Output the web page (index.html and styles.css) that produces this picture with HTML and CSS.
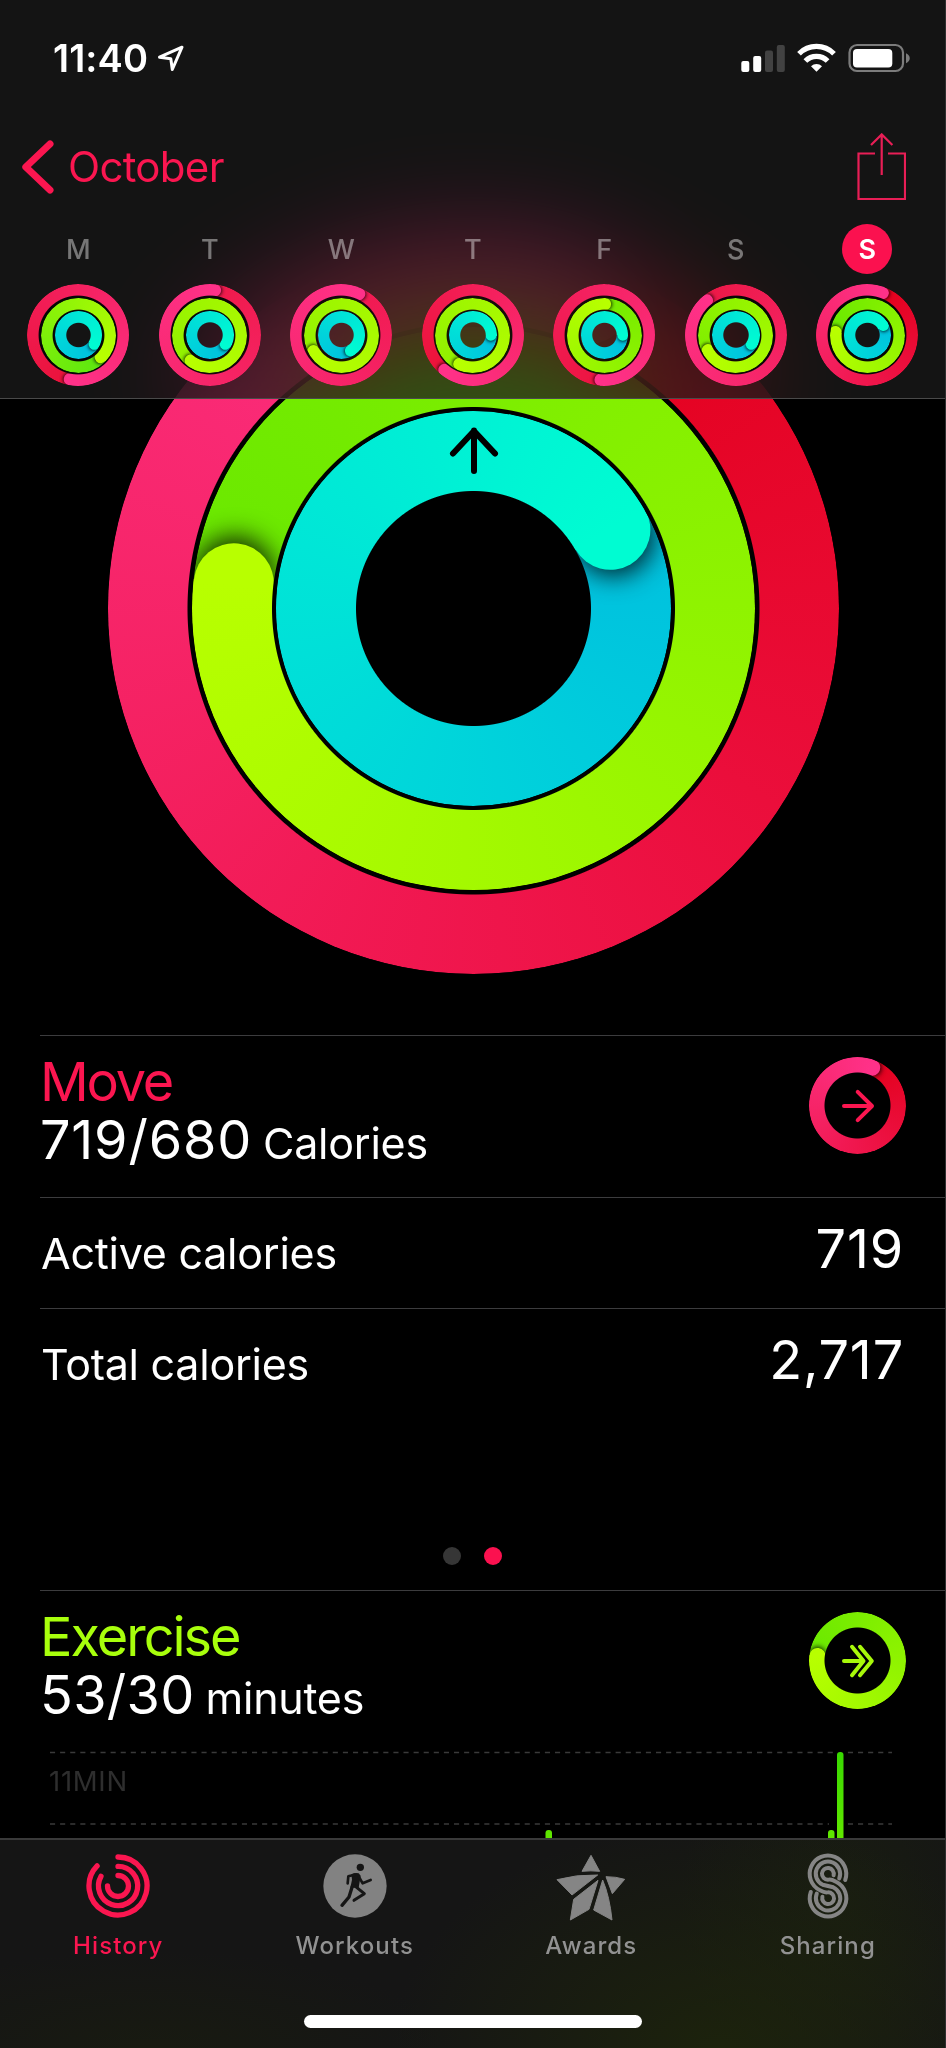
FILE: index.html
```html
<!DOCTYPE html>
<html lang="en">
<head>
<meta charset="utf-8">
<title>Activity</title>
<link rel="stylesheet" href="styles.css">
</head>
<body>
<div class="screen">
  <header class="header">
    <div class="status">
      <div class="clock"><span class="time">11:40</span>
        <svg class="location" width="28" height="28" viewBox="0 0 28 28"><path d="M2.5 13.2 25 3.2 15.3 25.5 13.8 14.7Z"/></svg>
      </div>
      <svg class="indicators" width="170" height="30" viewBox="741 43 170 30">
        <g fill="#fff"><rect x="741.3" y="61" width="8" height="11" rx="2"/><rect x="753.2" y="56" width="8" height="16" rx="2"/></g>
        <g fill="#424242"><rect x="765" y="50.5" width="8" height="21.5" rx="2"/><rect x="776.8" y="45" width="8" height="27" rx="2"/></g>
        <g fill="none" stroke="#fff" stroke-width="5.2"><path d="M799 53.8a24.5 24.5 0 0 1 35 0"/><path d="M805.4 61a15.5 15.5 0 0 1 22.2 0"/></g>
        <path fill="#fff" d="M811 66.2a8 8 0 0 1 11 0L816.5 71.8Z"/>
        <rect x="849.5" y="45" width="53.5" height="26" rx="7.5" fill="none" stroke="#7c7c7c" stroke-width="2.2"/>
        <rect x="853" y="49" width="39.3" height="18.4" rx="4" fill="#fff"/>
        <path fill="#7c7c7c" d="M906 53.2c5 2.4 5 7.6 0 10Z"/>
      </svg>
    </div>
    <nav class="nav">
      <a class="back">
        <svg width="34" height="56" viewBox="0 0 34 56"><path d="M30 5 5.800 28 30 51"/></svg>
        <span class="back-label">October</span>
      </a>
      <svg class="share" width="50" height="70" viewBox="0 0 50 70"><path d="M19 20.500H2.500V66H49V20.500H32M25.700 42V2M15 12 25.700 1.400 36.400 12"/></svg>
    </nav>
    <div class="week">
      <div class="day"><span class="letter">M</span><div class="dial small"><i class="ring move" style="--end:190deg;--dark:#ea123a"></i><i class="ring exercise" style="--end:133deg;--dark:#5be610"></i><i class="ring stand" style="--end:122deg"></i></div></div>
      <div class="day"><span class="letter">T</span><div class="dial small"><i class="ring move" style="--end:6.5deg;--dark:#ef1a4b"></i><i class="ring exercise" style="--end:217deg;--dark:#90f000"></i><i class="ring stand" style="--end:122deg"></i></div></div>
      <div class="day"><span class="letter">W</span><div class="dial small"><i class="ring move" style="--end:24deg;--dark:#f01a50"></i><i class="ring exercise" style="--end:240deg;--dark:#94f200"></i><i class="ring stand" style="--end:152deg"></i></div></div>
      <div class="day"><span class="letter">T</span><div class="dial small"><i class="ring move" style="--end:219deg;--dark:#ec1238"></i><i class="ring exercise" style="--end:205deg;--dark:#90f000"></i><i class="ring stand" style="--end:92deg"></i></div></div>
      <div class="day"><span class="letter">F</span><div class="dial small"><i class="ring move" style="--end:184deg;--dark:#ec1440"></i><i class="ring exercise" style="--end:2deg;--dark:#72ea00"></i><i class="ring stand" style="--end:92deg"></i></div></div>
      <div class="day"><span class="letter">S</span><div class="dial small"><i class="ring move" style="--end:320deg;--dark:#ec1846"></i><i class="ring exercise" style="--end:242deg;--dark:#80ee00"></i><i class="ring stand" style="--end:122deg"></i></div></div>
      <div class="day"><span class="letter today">S</span><div class="dial small"><i class="ring move" style="--end:20.6deg"></i><i class="ring exercise" style="--end:276deg"></i><i class="ring stand" style="--end:60deg"></i></div></div>
    </div>
  </header>

  <main class="content">
    <div class="hero">
      <div class="dial large">
        <i class="ring move" style="--end:20.6deg"></i><i class="ring exercise" style="--end:276deg"></i><i class="ring stand" style="--end:60deg"></i>
        <svg class="up" width="56" height="52" viewBox="-28 -4 56 52"><path d="M0 42V1.500M-21 24.500 0 2 21 24.500"/></svg>
      </div>
    </div>
    <section class="summary">
      <div>
        <h2 class="title pink">Move</h2>
        <p class="total"><span class="num n-move">719/680</span><span class="unit u-move">Calories</span></p>
      </div>
      <div class="dial badge"><i class="ring move" style="--end:20.6deg"></i>
        <svg width="40" height="40" viewBox="-20 -20 40 40" stroke="#fb1650"><path d="M-14 0H13M-.3-14.200 14 0-.3 14.200"/></svg></div>
    </section>
    <section class="row"><span class="label">Active calories</span><span class="value">719</span></section>
    <section class="row last"><span class="label">Total calories</span><span class="value">2,717</span></section>
    <div class="dots"><i class="dot"></i><i class="dot on"></i></div>
    <section class="summary">
      <div>
        <h2 class="title lime">Exercise</h2>
        <p class="total"><span class="num n-ex">53/30</span><span class="unit">minutes</span></p>
      </div>
      <div class="dial badge"><i class="ring exercise" style="--end:276deg"></i>
        <svg width="40" height="40" viewBox="-20 -20 40 40" stroke="#a8f80a"><path d="M-14 0H5M-6-14.200 5.500 0-6 14.200M2-14.200 13.800 0 2 14.200"/></svg></div>
    </section>
    <svg class="chart" width="846" height="90" viewBox="0 0 846 90">
      <defs><linearGradient id="bar" gradientUnits="userSpaceOnUse" x1="0" y1="2" x2="0" y2="90"><stop offset="0" stop-color="#37d900"/><stop offset="1" stop-color="#62e800"/></linearGradient></defs>
      <path d="M0 2.500H842M0 74H842" stroke="#3a3a3a" stroke-width="1.500" stroke-dasharray="5.100 5"/>
      <path d="M779 72H786V76H779ZM786 0H795V80H786Z" fill="#000"/>
      <g fill="url(#bar)"><rect x="495.500" y="80" width="6.500" height="20" rx="3"/><rect x="778" y="80" width="6.500" height="20" rx="3"/><rect x="787" y="2" width="6.500" height="98" rx="3"/></g>
      <text class="axis" x="-1" y="41">11MIN</text>
    </svg>
  </main>

  <footer class="tabs">
    <div class="tab active">
      <svg width="70" height="70" viewBox="-35 -35 70 70" fill="none" stroke="currentColor" stroke-width="5.300" stroke-linecap="round"><path d="M0-29A29 29 0 1 1-20.900-20.100"/><path d="M0-19.600A19.600 19.600 0 1 1-17-9.600"/><path d="M0-10.500A10.500 10.500 0 1 1-10.500 0"/></svg>
      <span>History</span>
    </div>
    <div class="tab">
      <svg width="70" height="70" viewBox="16 18 210 210"><circle cx="121" cy="123" r="95" fill="#828282"/><g fill="none" stroke="#151515" stroke-linecap="round" stroke-linejoin="round"><circle cx="137" cy="67" r="11" fill="#151515" stroke="none"/><path d="M110 88Q122 82 132 85L138 92 132 128 107 128 112 104Z" fill="#151515" stroke="none"/><path stroke-width="8" d="M99 115 101 94 120 89M133 96 144 115 168 105"/><path stroke-width="10" d="M113 124 103 156 82 181"/><path stroke-width="9" d="M122 124 149 146 118 166"/></g></svg>
      <span>Workouts</span>
    </div>
    <div class="tab">
      <svg width="70" height="70" viewBox="19 18 210 210" fill="#858585" stroke="#858585" stroke-width="3" stroke-linejoin="round"><path d="M124 31 97 79Q124 76 150 79Z"/><path d="M22 104Q80 88 144 90L67 150Z"/><path d="M169 95Q200 95 225 103L188 146Z"/><path d="M145 106 118 193 62 225 72 163Z"/><path d="M159 105Q180 155 187 225L132 195Z"/></svg>
      <span>Awards</span>
    </div>
    <div class="tab">
      <svg width="70" height="70" viewBox="-35 -35 70 70" fill="none" stroke="#858585" stroke-width="4" stroke-linecap="round"><path d="M17.200-6A18.300 18.300 0 1 0-8 4.300C-2 7.500-1.500 6.300 0 6.300A5.900 5.900 0 1 1-5.600 10.800"/><path d="M11.200-7.600A12.200 12.200 0 1 0-5.200-1.200L5.200 1.200A12.200 12.200 0 1 1-11.200 7.600"/><path d="M5.600-10.800A5.900 5.900 0 1 0 0-6.300C1.500-6.300 2-7.500 8-4.300A18.300 18.300 0 1 1-17.200 6"/></svg>
      <span>Sharing</span>
    </div>
    <div class="home"></div>
  </footer>
</div>
</body>
</html>
```
FILE: styles.css
```css
* { box-sizing: border-box; }
body { margin: 0; background: #000; }
h2, p { margin: 0; font-weight: 400; }
svg { display: block; flex: none; }

.screen {
  position: relative;
  width: 946px;
  height: 2048px;
  overflow: hidden;
  background: #000;
  color: #fff;
  font-family: Inter, "Liberation Sans", sans-serif;
}
/* hairline on the right edge of the display */
.screen::after {
  content: "";
  position: absolute;
  inset: 0 0 0 auto;
  z-index: 5;
  width: 1px;
  background: #303030;
}

/* translucent header over the scrolled content */
.header {
  position: absolute;
  inset: 0 0 auto;
  z-index: 2;
  height: 399px;
  padding-top: 36px;
  border-bottom: 1px solid #4a4a4a;
  background: rgba(27, 27, 27, .75);
  backdrop-filter: blur(54px) saturate(1.6);
}
.status {
  display: flex;
  justify-content: space-between;
  height: 44px;
  padding: 0 35px 0 53px;
}
.clock { display: flex; gap: 9px; height: 44px; align-items: center; }
.time { font-size: 38px; font-weight: 600; line-height: 44px; letter-spacing: .1px; }
.location { fill: none; stroke: #fff; stroke-width: 3; stroke-linejoin: round; }
.indicators { margin-top: 7px; }

.nav {
  display: flex;
  justify-content: space-between;
  height: 140px;
  padding: 53px 40px 0 20px;
}
.back { display: flex; gap: 14px; height: 70px; color: #fb1650; }
.back svg { margin-top: 6px; fill: none; stroke: #fb1650; stroke-width: 7; stroke-linecap: round; stroke-linejoin: round; }
.back-label { font-size: 42px; line-height: 68px; letter-spacing: -.7px; }
.share { fill: none; stroke: #e81e56; stroke-width: 2.2; }

.week {
  display: grid;
  grid-template-columns: repeat(7, 131.5px);
  padding-left: 12.5px;
}
.day { display: flex; flex-direction: column; align-items: center; gap: 10px; }
.letter {
  width: 50px;
  height: 50px;
  margin-top: 4px;
  border-radius: 50%;
  color: rgba(255, 255, 255, .42);
  font-size: 27px;
  font-weight: 500;
  line-height: 51px;
  text-align: center;
}
.letter.today { background: #fb114f; color: #fff; font-weight: 600; }

/* activity rings: --end is the angle the ring has reached */
.dial { display: grid; place-items: center; flex: none; }
.dial > * { grid-area: 1 / 1; }
.ring {
  position: relative;
  width: var(--size);
  height: var(--size);
  overflow: hidden;
  border-radius: 50%;
  background: conic-gradient(from var(--end), var(--dark), var(--light));
  mask: radial-gradient(circle closest-side, transparent calc(100% - var(--t) - .5px), #000 calc(100% - var(--t) + .5px));
}
.ring::before {
  content: "";
  position: absolute;
  top: 0;
  left: calc(50% - var(--t) / 2);
  width: var(--t);
  height: var(--t);
  border-radius: 50%;
  background: var(--light);
  box-shadow: calc(var(--t) * .08) 0 calc(var(--t) * .32) rgba(0, 0, 0, .85);
  transform: rotate(var(--end));
  transform-origin: 50% calc(var(--size) / 2);
}
.ring::after {
  content: "";
  position: absolute;
  inset: 0;
  background: conic-gradient(from calc(var(--end) + 180deg), color-mix(in srgb, var(--dark), var(--light)), var(--light) 180deg, transparent 180deg);
}
.move { --dark: #e3001c; --light: #ff3189; }
.exercise { --dark: #69e800; --light: #b8ff00; }
.stand { --dark: #00bfdf; --light: #00fcd2; }

.large { --t: 79.5px; width: 730px; height: 730px; }
.large .move { --size: 731px; }
.large .exercise { --size: 563px; --t: 80px; }
.large .stand { --size: 395px; --t: 80px; }

.small { --t: 11.6px; width: 102px; height: 102px; }
.small::before {
  content: "";
  grid-area: 1 / 1;
  width: 82px;
  height: 82px;
  border-radius: 50%;
  background: radial-gradient(circle, transparent 23px, rgba(0, 0, 0, .7) 24px);
}
.small .move { --size: 102px; }
.small .exercise { --size: 75px; }
.small .stand { --size: 47.5px; --t: 11.3px; }

.badge { --t: 15.5px; width: 97px; height: 97px; margin-top: -1px; }
.badge .ring { --size: 97px; }
.badge svg { fill: none; stroke-width: 4; stroke-linecap: round; stroke-linejoin: round; }

.content { padding-top: 243px; }
.hero { display: grid; justify-content: center; height: 792px; }
.up {
  position: relative;
  align-self: start;
  margin-top: 182px;
  fill: none;
  stroke: #000;
  stroke-width: 6;
  stroke-linecap: round;
  stroke-linejoin: round;
}

.summary, .row {
  display: flex;
  justify-content: space-between;
  margin-left: 40px;
  border-top: 1px solid #3c3c3e;
}
.summary { height: 162px; padding: 22px 40px 0 0; }
.title { margin-top: -5px; font-size: 54px; line-height: 58px; }
.pink { color: #fb1650; letter-spacing: -2.2px; }
.lime { color: #a8ff0c; letter-spacing: -2px; }
.total { display: flex; align-items: baseline; gap: 11px; line-height: 58px; white-space: nowrap; }
.num { font-size: 54px; letter-spacing: .8px; }
.n-ex { letter-spacing: .3px; }
.unit, .label { font-size: 43px; letter-spacing: -.25px; }
.row { height: 111px; padding: 0 42px 0 1px; }
.row.last { height: 236px; }
.label { line-height: 110px; }
.value { font-size: 54px; line-height: 102px; letter-spacing: .8px; }

.dots { display: flex; justify-content: center; gap: 22.5px; height: 46px; padding-right: 1px; }
.dot { width: 18px; height: 18px; margin-top: 3px; border-radius: 50%; background: #363636; }
.dot.on { background: #fb114f; }

.chart { margin: -2px 0 0 50px; }
.axis { font-size: 27.5px; fill: #2e2e2e; letter-spacing: .7px; }

.tabs {
  position: absolute;
  inset: auto 0 0;
  z-index: 2;
  display: grid;
  grid-template-columns: repeat(4, 1fr);
  grid-template-rows: 175px 33px;
  height: 210px;
  border-top: 2px solid #3a3a3a;
  background:
    radial-gradient(ellipse 330px 230px at 720px 210px, rgba(30, 38, 10, .8), transparent),
    radial-gradient(ellipse 160px 200px at 840px 60px, rgba(28, 36, 14, .5), transparent),
    radial-gradient(ellipse 300px 100px at 150px 210px, rgba(26, 30, 14, .6), transparent),
    #151515;
}
.tab { display: flex; flex-direction: column; align-items: center; gap: 10px; padding-top: 11px; color: #929292; }
.tab.active { color: #fb1650; }
.tab span { font-size: 24px; font-weight: 500; line-height: 30px; letter-spacing: 1.1px; }
.home { grid-column: 1 / -1; justify-self: center; width: 338px; height: 13px; border-radius: 7px; background: #fff; }
```
